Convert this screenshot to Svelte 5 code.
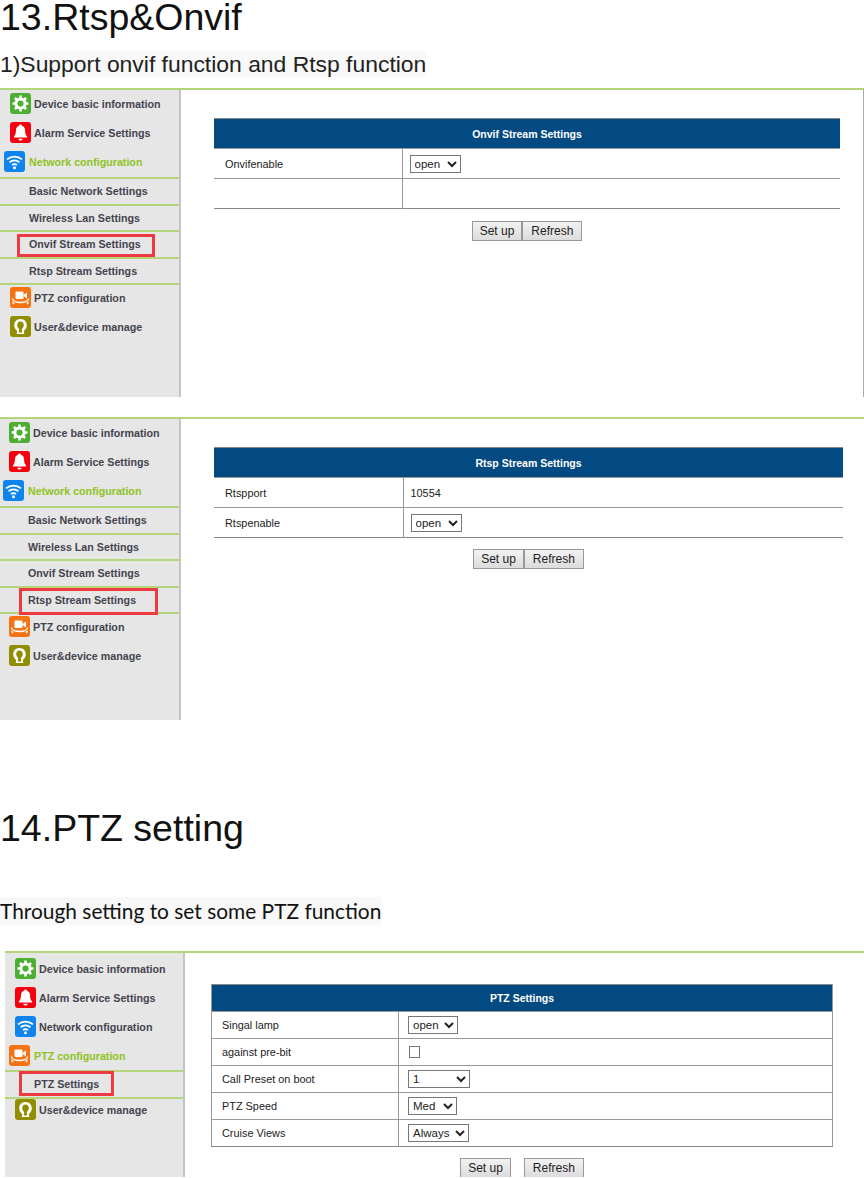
<script>
  const networkSubs = ['Basic Network Settings', 'Wireless Lan Settings', 'Onvif Stream Settings', 'Rtsp Stream Settings'];

  const mainMenu = (activeGroup) => [
    { label: 'Device basic information', icon: 'gear' },
    { label: 'Alarm Service Settings', icon: 'bell' },
    { label: 'Network configuration', icon: 'wifi', active: activeGroup === 'network', subs: activeGroup === 'network' ? networkSubs : [] },
    { label: 'PTZ configuration', icon: 'ptz', active: activeGroup === 'ptz', subs: activeGroup === 'ptz' ? ['PTZ Settings'] : [] },
    { label: 'User&device manage', icon: 'user' }
  ];

  const onvifPanel = {
    variant: 'onvif',
    group: 'network',
    title: 'Onvif Stream Settings',
    tableWidth: 626,
    labelWidth: 188,
    rows: [
      { label: 'Onvifenable', select: ['open', 'close'], width: 51 },
      { label: '' }
    ]
  };
  const rtspPanel = {
    variant: 'rtsp',
    group: 'network',
    title: 'Rtsp Stream Settings',
    tableWidth: 629,
    labelWidth: 189,
    rows: [
      { label: 'Rtspport', text: '10554' },
      { label: 'Rtspenable', select: ['open', 'close'], width: 51 }
    ]
  };
  const ptzPanel = {
    variant: 'ptz',
    group: 'ptz',
    title: 'PTZ Settings',
    tableWidth: 622,
    labelWidth: 187,
    rows: [
      { label: 'Singal lamp', select: ['open', 'close'], width: 50 },
      { label: 'against pre-bit', check: true },
      { label: 'Call Preset on boot', select: ['1', '2', '3'], width: 62 },
      { label: 'PTZ Speed', select: ['Med', 'Low', 'High'], width: 49 },
      { label: 'Cruise Views', select: ['Always', 'Never'], width: 61 }
    ]
  };
</script>

{#snippet icon(name)}
  <svg class="icon" viewBox="0 0 21 21" aria-hidden="true">
    {#if name === 'gear'}
      <rect width="21" height="21" rx="3" fill="#4caf32" />
      <circle cx="10.5" cy="10.5" r="4.6" fill="none" stroke="#fff" stroke-width="3" />
      <path d="M10.5 2.6v3M10.5 15.4v3M2.6 10.5h3M15.4 10.5h3M4.9 4.9l2.1 2.1M14 14l2.1 2.1M16.1 4.9L14 7M7 14l-2.1 2.1" stroke="#fff" stroke-width="2.6" />
    {:else if name === 'bell'}
      <rect width="21" height="21" rx="3" fill="#f5000f" />
      <path d="M10.5 2.5c.9 0 1.4.6 1.4 1.3 2.2.7 3.2 2.4 3.2 4.9 0 3 .8 4.5 2 5.800v1H3.900v-1c1.200-1.300 2-2.800 2-5.800 0-2.500 1-4.200 3.200-4.900 0-.7.500-1.300 1.400-1.300z" fill="#fff" />
      <path d="M8.300 16.700h4.400c-.2 1.200-1.100 1.800-2.200 1.800s-2-.6-2.200-1.800z" fill="#fff" />
    {:else if name === 'wifi'}
      <rect width="21" height="21" rx="3" fill="#0f84ee" />
      <path d="M3 8.400c4.400-3.800 10.600-3.800 15 0M5.600 11.300c2.900-2.400 6.900-2.400 9.800 0M8 14c1.500-1.100 3.500-1.100 5 0" fill="none" stroke="#fff" stroke-width="1.800" />
      <circle cx="10.500" cy="16.800" r="1.500" fill="#fff" />
    {:else if name === 'ptz'}
      <rect width="21" height="21" rx="3" fill="#f57312" />
      <rect x="5.500" y="4.500" width="8" height="7.500" rx="1" fill="#fff" />
      <path d="M13.500 8l3.500-2.500v6L13.500 9z" fill="#fff" />
      <path d="M2.500 11.500c0 2.400 3.500 4 8 4s8-1.600 8-4" fill="none" stroke="#fff" stroke-width="1.400" />
      <path d="M2 14.500l3 1.500-2 1.500zM19 14.500l-3 1.500 2 1.500z" fill="#fff" />
    {:else}
      <rect width="21" height="21" rx="3" fill="#928c00" />
      <path d="M10.500 3c3.800 0 6.300 2.800 6.300 6.300 0 2.500-1.200 4.300-3 5.700l.5 3H6.700l.5-3c-1.800-1.400-3-3.200-3-5.700C4.200 5.800 6.700 3 10.500 3z" fill="#fff" />
      <path d="M10.500 5.500c2 0 3.300 1.600 3.300 3.600 0 1.700-.9 3-2 3.900l.4 3.500H8.800l.4-3.500c-1.100-.9-2-2.200-2-3.900 0-2 1.300-3.600 3.300-3.600z" fill="#928c00" />
    {/if}
  </svg>
{/snippet}

{#snippet panel(p)}
  <section class="panel {p.variant}">
    <aside class="sidebar">
      {#each mainMenu(p.group) as item}
        <div class="menu-item" class:active={item.active}>
          {@render icon(item.icon)}
          <span>{item.label}</span>
        </div>
        {#if item.subs?.length}
          <div class="sub-list">
            {#each item.subs as sub}
              <div class="sub-item">
                <span>{sub}</span>
                {#if sub === p.title}<i class="marker"></i>{/if}
              </div>
            {/each}
          </div>
        {/if}
      {/each}
    </aside>
    <div class="content">
      <div class="form" style="width: {p.tableWidth}px">
        <table>
          <colgroup>
            <col style="width: {p.labelWidth}px" />
            <col />
          </colgroup>
          <thead>
            <tr><th colspan="2">{p.title}</th></tr>
          </thead>
          <tbody>
            {#each p.rows as row}
              <tr>
                <td class="label">{row.label}</td>
                <td class="value">
                  {#if row.select}
                    <select style="width: {row.width}px">
                      {#each row.select as opt}<option>{opt}</option>{/each}
                    </select>
                  {:else if row.check}
                    <input type="checkbox" />
                  {:else if row.text}
                    {row.text}
                  {/if}
                </td>
              </tr>
            {/each}
          </tbody>
        </table>
        <div class="actions">
          <button type="button">Set up</button>
          <button type="button" class="refresh">Refresh</button>
        </div>
      </div>
    </div>
  </section>
{/snippet}

<main class="page">
  <h1 class="first-title">13.Rtsp&amp;Onvif</h1>
  <p class="lead">1)<span>Support onvif function and Rtsp function</span></p>
  {@render panel(onvifPanel)}
  {@render panel(rtspPanel)}
  <h1 class="second-title">14.PTZ setting</h1>
  <p class="lead calibri"><span>Through setting to set some PTZ function</span></p>
  {@render panel(ptzPanel)}
</main>

<style>
  :global(body) {
    margin: 0;
    background: #fff;
  }

  .page {
    width: 864px;
    font-family: "Liberation Sans", Arial, sans-serif;
    color: #111;
  }

  h1 {
    margin: 0;
    font-size: 37.5px;
    font-weight: 400;
    line-height: 42px;
    color: #111;
  }

  .first-title {
    line-height: 34px;
  }

  .second-title {
    margin-top: 87px;
  }

  .lead {
    margin: 17px 0 11px;
    font-size: 22.9px;
    line-height: 26px;
    color: #222;
  }

  .lead span {
    display: inline-block;
    background: #f8f8f8;
  }

  .lead.calibri {
    margin: 48px 0 26px;
    font-family: Lato, sans-serif;
    font-size: 20.9px;
    line-height: 28px;
    color: #111;
  }

  .panel {
    display: flex;
    border-top: 2px solid #b5d57a;
    box-sizing: border-box;
  }

  .panel.onvif {
    height: 309px;
    margin-bottom: 20px;
    border-right: 1px solid #aaa;
  }

  .panel.rtsp {
    height: 303px;
  }

  .panel.ptz {
    height: 226px;
    margin-left: 5px;
  }

  .sidebar {
    width: 181px;
    flex-shrink: 0;
    box-sizing: border-box;
    background: #e6e6e6;
    border-right: 2px solid #c4c4c4;
  }

  .panel.ptz .sidebar {
    width: 180px;
    padding-top: 2px;
  }

  .menu-item {
    display: flex;
    align-items: center;
    gap: 3px;
    box-sizing: border-box;
    height: 29px;
    padding: 0 0 2px 10px;
    font-size: 10.7px;
    font-weight: 700;
    color: #44444f;
    white-space: nowrap;
  }

  .menu-item.active {
    padding-left: 4px;
    color: #8fc31f;
    gap: 4px;
  }

  .rtsp .menu-item {
    padding-left: 9px;
  }

  .rtsp .menu-item.active {
    padding-left: 3px;
  }

  .icon {
    width: 21px;
    height: 21px;
    flex-shrink: 0;
  }

  .sub-list {
    margin-bottom: -1px;
    border-top: 2px solid #b5d57a;
  }

  .ptz .sub-list {
    margin: -1px 0 -2.5px;
  }

  .sub-item {
    position: relative;
    display: flex;
    align-items: center;
    height: 24.5px;
    padding-left: 29px;
    font-size: 10.7px;
    font-weight: 700;
    color: #44444f;
    border-bottom: 2px solid #b5d57a;
    white-space: nowrap;
  }

  .rtsp .sub-item {
    padding-left: 28px;
  }

  .marker {
    position: absolute;
    left: 17px;
    top: 2px;
    width: 138px;
    height: 23px;
    box-sizing: border-box;
    border: 3px solid #ee3b43;
  }

  .rtsp .marker {
    left: 19px;
    top: 0;
    width: 139px;
    height: 27px;
  }

  .ptz .marker {
    left: 14px;
    top: -1px;
    width: 95px;
    height: 25px;
  }

  .content {
    flex: 1;
    padding: 28px 0 0 33px;
    min-width: 0;
  }

  .ptz .content {
    padding: 31px 0 0 26px;
  }

  table {
    width: 100%;
    border-collapse: collapse;
    table-layout: fixed;
    font-size: 10.9px;
    color: #222;
    border-bottom: 1px solid #888;
  }

  th {
    height: 29px;
    padding: 0;
    background: #034a82;
    color: #fff;
    font-size: 10.5px;
    font-weight: 700;
    border-top: 1px solid #888;
  }

  td {
    height: 29px;
    padding: 0 0 0 11px;
    border-top: 1px solid #999;
  }

  td.label {
    border-right: 1px solid #999;
  }

  td.value {
    padding-left: 7px;
  }

  .ptz th,
  .ptz td {
    height: 26px;
  }

  .ptz td.label {
    padding-left: 10px;
  }

  .ptz td.value {
    padding-left: 9px;
  }

  .ptz table {
    border-left: 1px solid #999;
    border-right: 1px solid #999;
  }

  select {
    display: block;
    height: 18px;
    padding: 0;
    font-family: inherit;
    font-size: 11.5px;
    color: #222;
    background: #fff;
    border: 1px solid #767676;
    border-radius: 0;
  }

  input[type="checkbox"] {
    display: block;
    appearance: none;
    width: 11px;
    height: 12px;
    margin: 0 0 0 1px;
    background: #fff;
    border: 1px solid #767676;
    border-radius: 0;
  }

  .actions {
    display: flex;
    justify-content: center;
    margin-top: 12px;
  }

  .rtsp .actions {
    margin-top: 11px;
  }

  .ptz .actions {
    margin-top: 11px;
    gap: 13px;
  }

  button {
    height: 20px;
    padding: 0 7px;
    font-family: inherit;
    font-size: 12px;
    color: #222;
    background: linear-gradient(#f2f2f2, #dcdcdc);
    border: 1px solid #999;
    border-radius: 0;
  }

  button.refresh {
    padding: 0 8px;
  }
</style>
